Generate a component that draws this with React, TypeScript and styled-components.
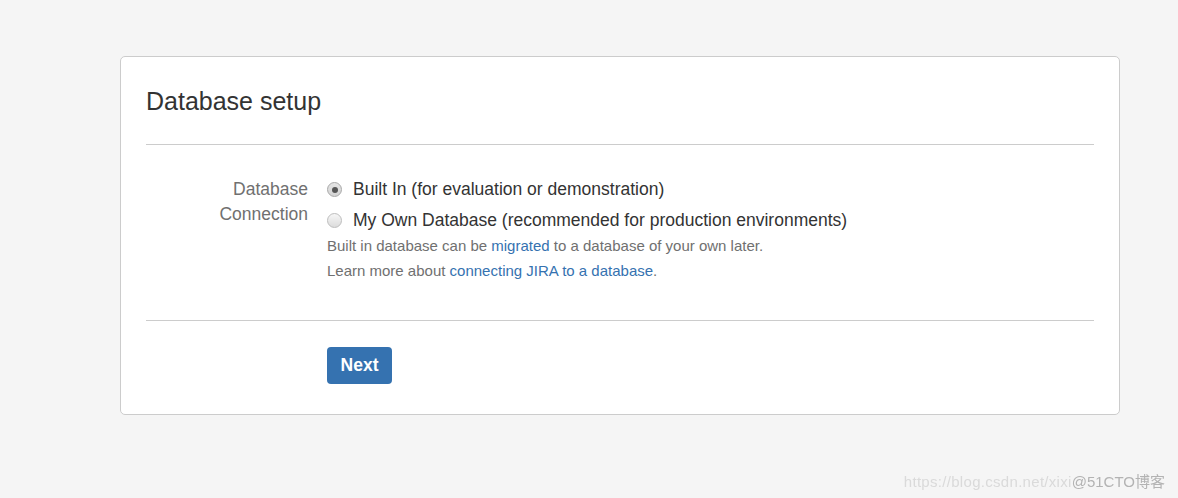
import React from "react";
import styled, { createGlobalStyle } from "styled-components";

const GlobalStyle = createGlobalStyle`
  html, body {
    margin: 0;
    padding: 0;
    background: #f5f5f5;
    font-family: Arial, "Liberation Sans", Helvetica, sans-serif;
    color: #333333;
  }
  * { box-sizing: border-box; }
`;

const Page = styled.div`
  min-height: 498px;
  padding: 56px 0 0 120px;
`;

const Card = styled.section`
  width: 1000px;
  background: #ffffff;
  border: 1px solid #cccccc;
  border-radius: 5px;
  padding: 29px 25px 30px;
`;

const Title = styled.h2`
  margin: 0;
  font-size: 25px;
  line-height: 30px;
  font-weight: normal;
  color: #333333;
`;

const Divider = styled.div<{ $gap: number }>`
  height: 1px;
  background: #cccccc;
  margin-top: ${(p) => p.$gap}px;
`;

const FieldRow = styled.div<{ $gap: number }>`
  display: grid;
  grid-template-columns: 162px 1fr;
  column-gap: 19px;
  margin-top: ${(p) => p.$gap}px;
`;

const Label = styled.label`
  text-align: right;
  font-size: 17.5px;
  line-height: 25px;
  color: #707070;
`;

const Options = styled.div`
  display: flex;
  flex-direction: column;
`;

const Option = styled.label`
  display: flex;
  align-items: center;
  height: 25px;
  font-size: 17.5px;
  color: #333333;
  & + & {
    margin-top: 6px;
  }
`;

const Radio = styled.span<{ $checked?: boolean }>`
  display: inline-flex;
  align-items: center;
  justify-content: center;
  width: 15px;
  height: 15px;
  border-radius: 50%;
  border: 1px solid ${(p) => (p.$checked ? "#a8a8a8" : "#bdbdbd")};
  background: ${(p) =>
    p.$checked
      ? "linear-gradient(#e4e4e4, #d4d4d4)"
      : "linear-gradient(#f6f6f6, #dcdcdc)"};
  margin-right: 11px;
  flex: none;
  &::after {
    content: "";
    display: ${(p) => (p.$checked ? "block" : "none")};
    width: 6px;
    height: 6px;
    border-radius: 50%;
    background: #555555;
  }
`;

const Help = styled.div`
  font-size: 15px;
  line-height: 25px;
  color: #707070;
`;

const Link = styled.a`
  color: #3572b0;
  text-decoration: none;
`;

const Spacer = styled.div``;

const PrimaryButton = styled.button`
  height: 37px;
  width: 65px;
  padding: 0;
  border: none;
  border-radius: 4px;
  background: #3572b0;
  color: #ffffff;
  font-family: Arial, "Liberation Sans", Helvetica, sans-serif;
  font-size: 17.5px;
  font-weight: bold;
  cursor: pointer;
`;

const Watermark = styled.div`
  position: fixed;
  right: 13px;
  bottom: 6px;
  display: flex;
  font-size: 15px;
  line-height: 20px;
  font-family: Arial, "Liberation Sans", "Noto Sans CJK SC", sans-serif;
`;

const WatermarkUrl = styled.span`
  color: #dadada;
  letter-spacing: 0.3px;
`;

const WatermarkBrand = styled.span`
  color: #b3b3b3;
`;

export default function App() {
  return (
    <>
      <GlobalStyle />
      <Page>
        <Card>
          <Title>Database setup</Title>
          <Divider $gap={28} />
          <FieldRow $gap={32}>
            <Label>
              Database
              <br />
              Connection
            </Label>
            <Options>
              <Option>
                <Radio $checked />
                Built In (for evaluation or demonstration)
              </Option>
              <Option>
                <Radio />
                My Own Database (recommended for production environments)
              </Option>
              <Help>
                Built in database can be <Link href="#">migrated</Link> to a
                database of your own later.
              </Help>
              <Help>
                Learn more about{" "}
                <Link href="#">connecting JIRA to a database</Link>.
              </Help>
            </Options>
          </FieldRow>
          <Divider $gap={37} />
          <FieldRow $gap={26}>
            <Spacer />
            <div>
              <PrimaryButton>Next</PrimaryButton>
            </div>
          </FieldRow>
        </Card>
      </Page>
      <Watermark>
        <WatermarkUrl>https://blog.csdn.net/xixi</WatermarkUrl>
        <WatermarkBrand>@51CTO博客</WatermarkBrand>
      </Watermark>
    </>
  );
}
